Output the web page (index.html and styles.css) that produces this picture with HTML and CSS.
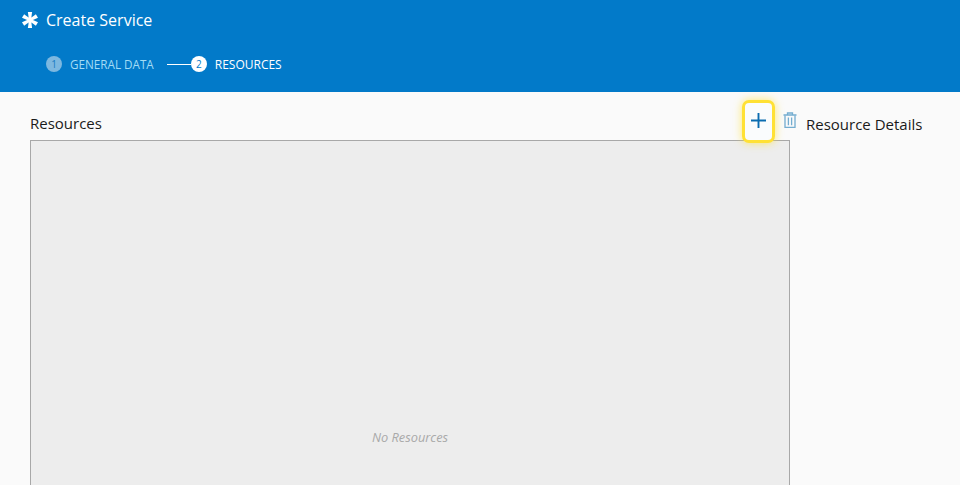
FILE: index.html
```html
<!DOCTYPE html>
<html lang="en">
<head>
<meta charset="utf-8">
<title>Create Service</title>
<link rel="stylesheet" href="styles.css">
</head>
<body>
<header class="header">
  <div class="title-row">
    <svg class="logo" viewBox="0 0 16 16" aria-hidden="true"><g fill="#fff"><path d="M5.9 0h4.2L9.3 6H6.7z"/><path d="M5.9 0h4.2L9.3 6H6.7z" transform="rotate(60 8 8)"/><path d="M5.9 0h4.2L9.3 6H6.7z" transform="rotate(120 8 8)"/><path d="M5.9 0h4.2L9.3 6H6.7z" transform="rotate(180 8 8)"/><path d="M5.9 0h4.2L9.3 6H6.7z" transform="rotate(240 8 8)"/><path d="M5.9 0h4.2L9.3 6H6.7z" transform="rotate(300 8 8)"/><circle cx="8" cy="8" r="2.8"/></g></svg>
    <h1 class="title">Create Service</h1>
  </div>
  <ol class="steps">
    <li class="step step-done"><span class="badge">1</span><span class="step-label">GENERAL DATA</span></li>
    <li class="connector"></li>
    <li class="step step-active"><span class="badge">2</span><span class="step-label">RESOURCES</span></li>
  </ol>
</header>
<main class="main">
  <section class="resources">
    <div class="res-head">
      <h2 class="heading heading-left">Resources</h2>
      <div class="actions">
        <button class="add" type="button" aria-label="Add"><svg viewBox="0 0 15 15" class="plus"><path d="M7.5 0v15M0 7.5h15" stroke="#0a6cb0" stroke-width="1.9" fill="none"/></svg></button>
        <button class="trash" type="button" aria-label="Delete"><svg viewBox="0 0 14 16" class="trash-icon"><g fill="none" stroke="#74add0" stroke-width="1.3"><path d="M0.5 3h13M4.5 3V1h5v2"/><path d="M2 3.5v11.8h10V3.5"/><path d="M5.4 5.5v7.8M8.6 5.5v7.8"/></g></svg></button>
      </div>
    </div>
    <div class="panel"><span class="empty">No Resources</span></div>
  </section>
  <aside class="details"><h2 class="heading">Resource Details</h2></aside>
</main>
</body>
</html>
```
FILE: styles.css
```css
html, body { margin: 0; padding: 0; height: 100%; overflow: hidden; }
body { background: #fafafa; font-family: "Open Sans", "Noto Sans", sans-serif; color: #1a1a1a; }
.header { height: 92px; background: #027ac9; box-sizing: border-box; padding: 10px 0 0 22px; color: #fff; }
.title-row { display: flex; align-items: center; gap: 8px; height: 20px; }
.logo { width: 16px; height: 16px; }
.title { margin: 0; font-weight: 400; line-height: 20px; font-size: 16px; }
.steps { list-style: none; margin: 25px 0 0 24px; padding: 0; display: flex; align-items: center; height: 18px; }
.step { display: flex; align-items: center; font-size: 11.7px; }
.badge { width: 16px; height: 16px; border-radius: 50%; font-size: 10px; line-height: 16px; text-align: center; margin-right: 8px; }
.step-done .badge { background: #7db8e0; color: #1a7cc0; }
.step-done .step-label { color: #a3dcf5; }
.step-active { font-size: 12px; }
.step-active .badge { background: #fff; color: #027ac9; }
.step-active .step-label { color: #fff; }
.connector { width: 24px; height: 1px; background: #fff; margin: 0 0 0 13px; }
.main { display: flex; padding: 8px 0 0 30px; }
.resources { width: 760px; }
.res-head { display: flex; justify-content: space-between; align-items: flex-start; height: 40px; width: 768px; }
.heading { margin: 15px 0 0; font-size: 15px; font-weight: 400; line-height: 18px; color: #1a1a1a; }
.heading-left { margin-top: 14px; }
.actions { display: flex; align-items: flex-start; position: relative; }
.add { width: 33px; height: 43px; box-sizing: border-box; padding: 0; border: 3px solid #ffe135; border-radius: 7px; background: #fafcfd; box-shadow: 0 0 8px rgba(255,225,53,.7); display: flex; align-items: center; justify-content: center; position: relative; z-index: 1; margin-right: 8px; }
.plus { width: 15px; height: 15px; margin-top: -3px; }
.trash { width: 14px; height: 30px; padding: 0; border: 0; background: none; display: flex; align-items: center; margin-right: 1px; }
.trash-icon { width: 14px; height: 16px; margin-top: 10px; }
.panel { width: 760px; height: 400px; box-sizing: border-box; border: 1px solid #a8a8a8; background: #ededed; display: flex; justify-content: center; padding-top: 287px; }
.empty { font-size: 12.8px; font-style: italic; color: #a9a9a9; line-height: 18px; }
.details { margin-left: 16px; }
```
